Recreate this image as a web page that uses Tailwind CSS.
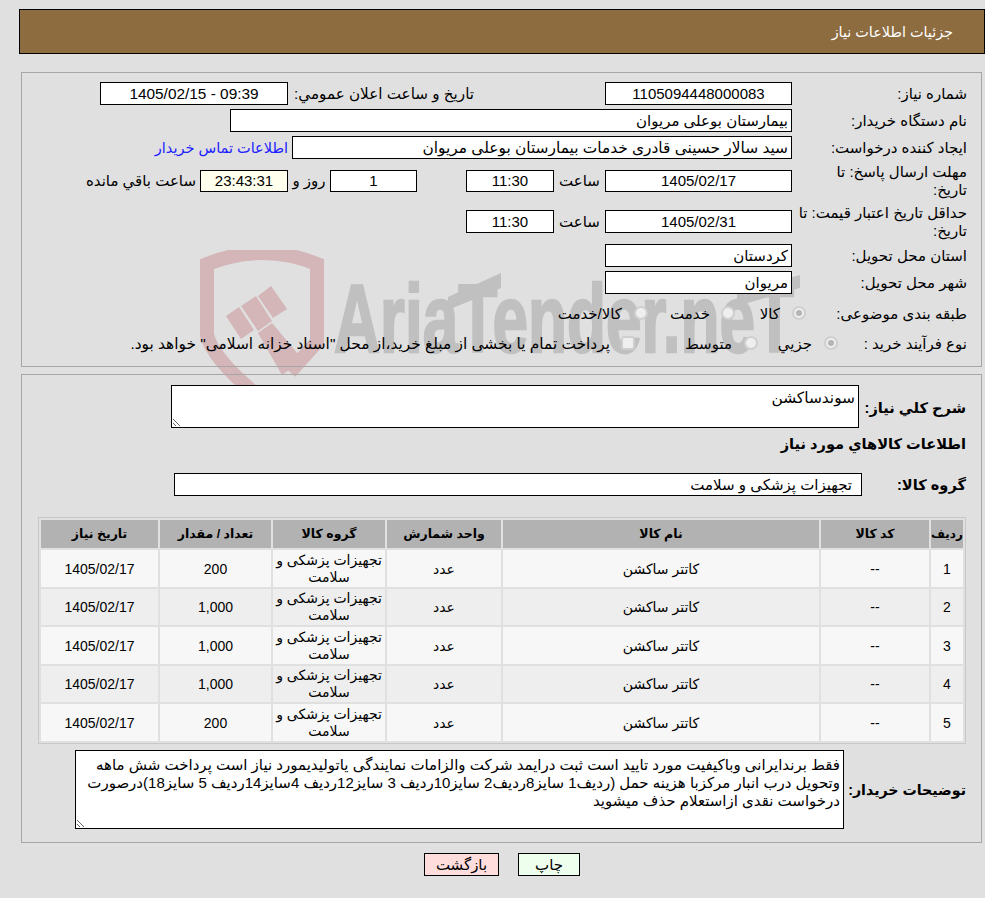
<!DOCTYPE html>
<html dir="rtl" lang="fa"><head><meta charset="utf-8">
<script src="https://cdn.jsdelivr.net/npm/@tailwindcss/browser@4"></script>
<title>جزئیات اطلاعات نیاز</title></head>
<body class="bg-[#e0e0e0] h-[898px] overflow-hidden relative font-['Liberation_Sans','DejaVu_Sans',sans-serif] text-[15px] leading-[18px] text-black">

<!-- watermark behind content -->
<div class="absolute left-[198px] top-[250px] w-[620px] h-[150px]">
<svg class="absolute left-0 top-0" width="130" height="150" viewBox="0 0 130 150"><path d="M92 122 L119 92 V14 Q65 -8 9 14 V85 Q15 110 65 150" fill="none" stroke="#d4b5b8" stroke-width="14"/><g fill="#d4b5b8"><path d="M28 66 L41 57 L56 80 L43 89Z"/><path d="M43 56 L58 46 L74 71 L60 81Z"/><path d="M60 46 L73 36 L89 59 L75 68Z"/><path d="M60 83 L74 73 L105 110 L84 125Z"/></g></svg>
<div dir="ltr" class="absolute left-[136px] top-[14px] text-[#c0c0c0] font-bold text-[96px] leading-[110px] scale-x-[0.665] origin-left whitespace-nowrap [-webkit-text-stroke:2.5px_#c0c0c0]">AriaTender.neT</div>
<svg class="absolute left-0 top-0" width="620" height="70" viewBox="0 0 620 70"><path d="M250 47 L303 23 V38 L250 60Z M539 43 L602 25 V38 L539 56Z" fill="#c0c0c0"/></svg>
</div>

<div class="relative">
<div class="pt-[9px] pl-[19px]">
<div class="h-[45px] bg-[#8d6c40] border border-black text-white flex items-center pr-[31px] text-[14.4px] pt-[1px]">جزئیات اطلاعات نیاز</div>
</div>

<!-- panel 1 -->
<div class="ml-[21px] mr-[3px] mt-[18px] h-[295px] border border-[#a6a6a6] pt-[9px] flex flex-col">
 <div class="flex items-center h-[23px]">
  <div class="w-[189px] pr-[14px] shrink-0">شماره نیاز:</div>
  <div dir="ltr" class="w-[187px] h-[23px] bg-white border border-black text-center leading-[21px] shrink-0">1105094448000083</div>
  <div class="w-[186px] pr-[131px] shrink-0 whitespace-nowrap text-[15.2px]">تاريخ و ساعت اعلان عمومي:</div>
  <div dir="ltr" class="w-[188px] h-[23px] bg-white border border-black text-center leading-[21px] shrink-0 mr-[131px] text-[15.4px]">1405/02/15 - 09:39</div>
 </div>
 <div class="flex items-center h-[23px] mt-[4px]">
  <div class="w-[189px] pr-[14px] shrink-0">نام دستگاه خریدار:</div>
  <div class="w-[562px] h-[23px] bg-white border border-black pr-[3px] leading-[21px] shrink-0">بیمارستان بوعلی مریوان</div>
 </div>
 <div class="flex items-center h-[23px] mt-[4px]">
  <div class="w-[189px] pr-[14px] shrink-0">ایجاد کننده درخواست:</div>
  <div class="w-[500px] h-[23px] bg-white border border-black pr-[3px] leading-[21px] shrink-0 text-[15.4px]">سید سالار حسینی قادری خدمات بیمارستان بوعلی مریوان</div>
  <a class="mr-[4px] text-[#2020ff] whitespace-nowrap text-[14.5px]">اطلاعات تماس خریدار</a>
 </div>
 <div class="flex items-center h-[22px] mt-[11px]">
  <div class="w-[189px] pr-[14px] shrink-0">مهلت ارسال پاسخ: تا<br>تاریخ:</div>
  <div dir="ltr" class="w-[187px] h-[22px] bg-white border border-black text-center leading-[20px] shrink-0">1405/02/17</div>
  <div class="w-[51px] text-center shrink-0">ساعت</div>
  <div dir="ltr" class="w-[88px] h-[22px] bg-white border border-black text-center leading-[20px] shrink-0">11:30</div>
  <div class="w-[49px] shrink-0"></div>
  <div dir="ltr" class="w-[87px] h-[22px] bg-white border border-black text-center leading-[20px] shrink-0">1</div>
  <div class="w-[42px] text-center shrink-0">روز و</div>
  <div dir="ltr" class="w-[88px] h-[22px] bg-[#ffffee] border border-black text-center leading-[20px] shrink-0">23:43:31</div>
  <div class="mr-[4px] whitespace-nowrap">ساعت باقي مانده</div>
 </div>
 <div class="flex items-center h-[23px] mt-[18px]">
  <div class="w-[189px] pr-[14px] shrink-0">حداقل تاریخ اعتبار قیمت: تا<br>تاریخ:</div>
  <div dir="ltr" class="w-[187px] h-[23px] bg-white border border-black text-center leading-[21px] shrink-0">1405/02/31</div>
  <div class="w-[51px] text-center shrink-0">ساعت</div>
  <div dir="ltr" class="w-[88px] h-[23px] bg-white border border-black text-center leading-[21px] shrink-0">11:30</div>
 </div>
 <div class="flex items-center h-[23px] mt-[11px]">
  <div class="w-[189px] pr-[14px] shrink-0">استان محل تحویل:</div>
  <div class="w-[187px] h-[23px] bg-white border border-black pr-[3px] leading-[21px] shrink-0">کردستان</div>
 </div>
 <div class="flex items-center h-[23px] mt-[4px]">
  <div class="w-[189px] pr-[14px] shrink-0">شهر محل تحویل:</div>
  <div class="w-[187px] h-[23px] bg-white border border-black pr-[3px] leading-[21px] shrink-0">مریوان</div>
 </div>
 <div class="flex items-center h-[18px] mt-[10px]">
  <div class="w-[175px] pr-[14px] shrink-0 whitespace-nowrap pt-[2px]">طبقه بندی موضوعی:</div>
  <span class="w-[14px] h-[14px] rounded-full border-2 border-[#cfcfcf] bg-[#efefef] flex items-center justify-center shrink-0"><span class="w-[6px] h-[6px] rounded-full bg-[#b5b5b5]"></span></span>
  <span class="w-[45px] mr-[12px] shrink-0 pt-[2px]">کالا</span>
  <span class="w-[14px] h-[14px] rounded-full border-2 border-[#cfcfcf] bg-[#efefef] shrink-0"></span>
  <span class="w-[62px] mr-[11px] shrink-0 pt-[2px]">خدمت</span>
  <span class="w-[14px] h-[14px] rounded-full border-2 border-[#cfcfcf] bg-[#efefef] shrink-0"></span>
  <span class="mr-[12px] whitespace-nowrap pt-[2px]">کالا/خدمت</span>
 </div>
 <div class="flex items-center h-[18px] mt-[12px]">
  <div class="w-[143px] pr-[14px] shrink-0 whitespace-nowrap pt-[2px]">نوع فرآیند خرید :</div>
  <span class="w-[14px] h-[14px] rounded-full border-2 border-[#cfcfcf] bg-[#efefef] flex items-center justify-center shrink-0"><span class="w-[6px] h-[6px] rounded-full bg-[#b5b5b5]"></span></span>
  <span class="w-[54px] mr-[12px] shrink-0 pt-[2px]">جزيي</span>
  <span class="w-[14px] h-[14px] rounded-full border-2 border-[#cfcfcf] bg-[#efefef] shrink-0"></span>
  <span class="w-[97px] mr-[12px] shrink-0 pt-[2px]">متوسط</span>
  <span class="w-[14px] h-[14px] rounded-[3px] border-2 border-[#cfcfcf] bg-[#efefef] shrink-0"></span>
  <span class="mr-[11px] whitespace-nowrap text-[15.4px] pt-[2px]">پرداخت تمام یا بخشی از مبلغ خرید،از محل "اسناد خزانه اسلامی" خواهد بود.</span>
 </div>
</div>

<!-- panel 2 -->
<div class="ml-[21px] mr-[3px] mt-[7px] h-[469px] border border-[#a6a6a6] pt-[10px] pr-[15px] flex flex-col items-start">
 <div class="flex w-full h-[43px]">
  <div class="w-[107px] font-bold text-[14.6px] flex items-center shrink-0 pt-[2px] whitespace-nowrap">شرح كلي نياز:</div>
  <textarea readonly class="w-[688px] h-[43px] bg-white border border-black px-[3px] py-[3px] leading-[18px] outline-none text-[15.4px]">سوندساکشن</textarea>
 </div>
 <div class="font-bold text-[14.6px] mt-[6px] h-[20px] leading-[20px]">اطلاعات كالاهاي مورد نياز</div>
 <div class="flex items-center w-full h-[23px] mt-[19px]">
  <div class="w-[104px] font-bold text-[14.6px] shrink-0 whitespace-nowrap">گروه كالا:</div>
  <div class="w-[688px] h-[23px] bg-white border border-black pr-[9px] leading-[21px]">تجهیزات پزشکی و سلامت</div>
 </div>
 <div class="mt-[21px] border border-[#c8c8c8] bg-[#e0e0e0] w-[928px]">
 <table class="table-fixed border-separate border-spacing-[2px] text-[14px] leading-[17px] w-[926px] text-center">
  <colgroup><col class="w-[32px]"><col class="w-[108px]"><col class="w-[316px]"><col class="w-[114px]"><col class="w-[112px]"><col class="w-[111px]"><col class="w-[117px]"></colgroup>
  <thead><tr class="h-[28px] bg-[#b2b2b2] font-bold text-[12.5px]"><th class="p-0 text-[12px]">ردیف</th><th class="p-0">کد کالا</th><th class="p-0">نام کالا</th><th class="p-0">واحد شمارش</th><th class="p-0">گروه کالا</th><th class="p-0">تعداد / مقدار</th><th class="p-0">تاریخ نیاز</th></tr></thead>
  <tbody>
   <tr class="h-[37px] bg-[#f7f7f7]"><td class="pt-px">1</td><td class="pt-px">--</td><td class="pt-px">کاتتر ساکشن</td><td class="pt-px">عدد</td><td>تجهیزات پزشکی و سلامت</td><td class="pt-px">200</td><td class="pt-px">1405/02/17</td></tr>
   <tr class="h-[36px] bg-[#eeeeee]"><td class="pt-px">2</td><td class="pt-px">--</td><td class="pt-px">کاتتر ساکشن</td><td class="pt-px">عدد</td><td>تجهیزات پزشکی و سلامت</td><td class="pt-px">1,000</td><td class="pt-px">1405/02/17</td></tr>
   <tr class="h-[37px] bg-[#f7f7f7]"><td class="pt-px">3</td><td class="pt-px">--</td><td class="pt-px">کاتتر ساکشن</td><td class="pt-px">عدد</td><td>تجهیزات پزشکی و سلامت</td><td class="pt-px">1,000</td><td class="pt-px">1405/02/17</td></tr>
   <tr class="h-[36px] bg-[#eeeeee]"><td class="pt-px">4</td><td class="pt-px">--</td><td class="pt-px">کاتتر ساکشن</td><td class="pt-px">عدد</td><td>تجهیزات پزشکی و سلامت</td><td class="pt-px">1,000</td><td class="pt-px">1405/02/17</td></tr>
   <tr class="h-[37px] bg-[#f7f7f7]"><td class="pt-px">5</td><td class="pt-px">--</td><td class="pt-px">کاتتر ساکشن</td><td class="pt-px">عدد</td><td>تجهیزات پزشکی و سلامت</td><td class="pt-px">200</td><td class="pt-px">1405/02/17</td></tr>
  </tbody>
 </table>
 </div>
 <div class="flex w-full h-[79px] mt-[6px]">
  <div class="w-[122px] font-bold text-[14.2px] flex items-center shrink-0 whitespace-nowrap">توضیحات خریدار:</div>
  <textarea readonly class="w-[769px] h-[79px] bg-white border border-black px-[3px] py-[5px] leading-[18px] outline-none">فقط برندایرانی وباکیفیت مورد تایید است ثبت درایمد شرکت والزامات نمایندگی یاتولیدیمورد نیاز است پرداخت شش ماهه وتحویل درب انبار مرکزبا هزینه حمل (ردیف1 سایز8ردیف2 سایز10ردیف 3 سایز12ردیف 4سایز14ردیف 5 سایز18)درصورت درخواست نقدی ازاستعلام حذف میشوید</textarea>
 </div>
</div>

<!-- buttons -->
<div class="flex mt-[10px] gap-[19px] pr-[405px]">
 <button class="w-[62px] h-[23px] bg-[#eeffee] border border-black">چاپ</button>
 <button class="w-[75px] h-[23px] bg-[#ffdddd] border border-black">بازگشت</button>
</div>
</div>
</body></html>
